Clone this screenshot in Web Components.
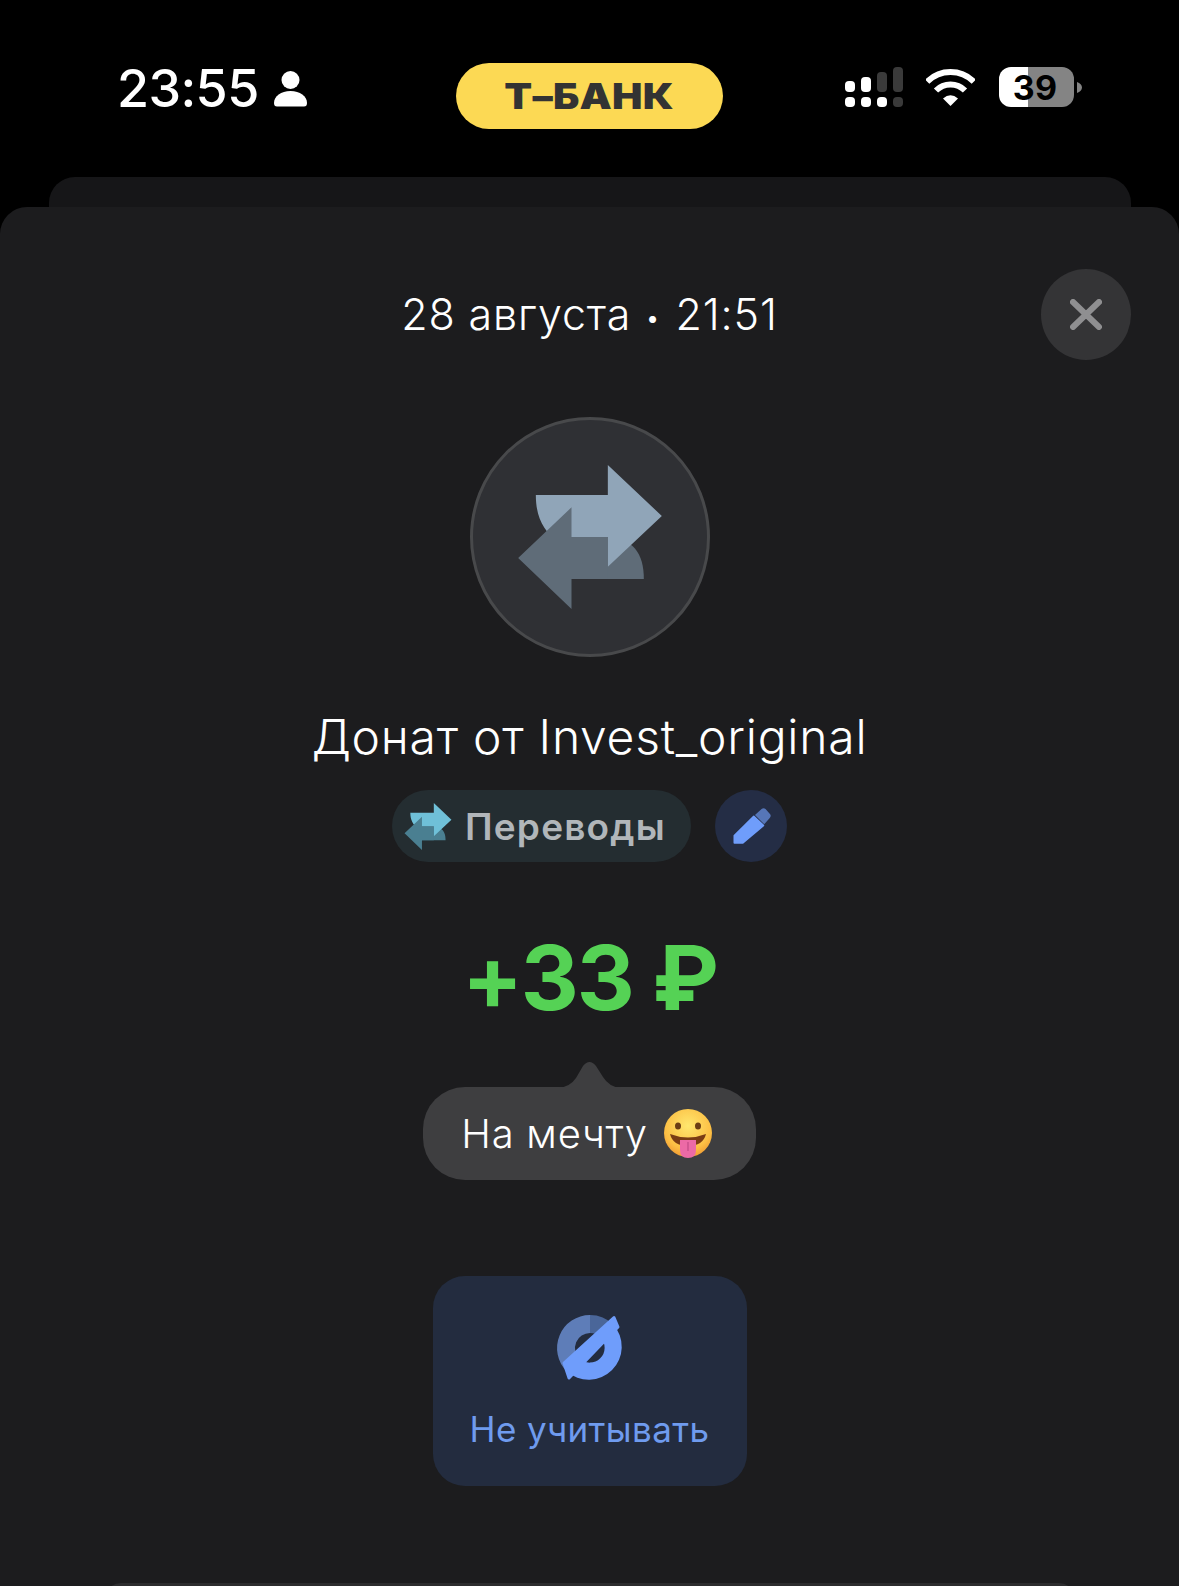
<!DOCTYPE html>
<html lang="ru"><head><meta charset="utf-8"><style>
html,body{margin:0;padding:0;background:#000;height:1586px;overflow:hidden}
body{font-family:Inter,"Noto Sans",sans-serif;color:#fff}
</style></head><body>
<app-screen>
  <status-bar></status-bar>
  <detail-sheet>
    <sheet-header>28 августа <span>•</span> 21:51</sheet-header>
    <op-avatar></op-avatar>
    <op-title>Донат от Invest_original</op-title>
    <op-tags>
      <category-chip>Переводы</category-chip>
      <edit-button></edit-button>
    </op-tags>
    <op-amount>+33 ₽</op-amount>
    <comment-bubble>На мечту</comment-bubble>
    <action-tile>Не учитывать</action-tile>
  </detail-sheet>
</app-screen>
<script>
function def(name, html){
  customElements.define(name, class extends HTMLElement{
    constructor(){super();this.attachShadow({mode:'open'}).innerHTML=html;}
  });
}
const arrows=`<svg viewBox="175 165 431 432" width="100%" height="100%" style="display:block">
<path fill="var(--a2)" d="M335 381H440C520 385 552 430 552 507H335Z"/>
<path fill="var(--a1)" d="M228 255H444V165L606 318L444 470V381H335V400H300C250 365 228 320 228 255Z"/>
<path fill="var(--a2)" d="M175 444L335 292V381H444V507H335V597Z"/></svg>`;
customElements.define('arrow-pair', class extends HTMLElement{
  constructor(){super();this.attachShadow({mode:'open'}).innerHTML=`<style>:host{display:block;--a1:#90a5b8;--a2:#5f6c78}</style>`+arrows;}
});
def('app-screen',`<style>:host{display:flex;flex-direction:column;height:1586px;overflow:hidden;background:#000}</style><slot></slot>`);
def('status-bar',`<style>
:host{display:grid;grid-template-columns:1fr auto 1fr;align-items:start;height:177px;box-sizing:border-box;padding-top:63px}
.l{display:flex;align-items:flex-start;padding:0 0 0 117px;gap:15px;font-size:52px;font-weight:500;line-height:52px;letter-spacing:-.6px}
.l svg{margin-top:8px}
.pill{width:267px;height:66px;border-radius:33px;background:#fcd954;color:#333;display:flex;align-items:center;justify-content:center;font-size:35px;font-weight:900;letter-spacing:.2px}
.pill span{display:inline-block;transform:scaleX(1.16)}
.r{justify-self:end;display:flex;align-items:flex-start;padding:4px 97px 0 0}
.wifi{margin:2px 0 0 22px}
.bat{margin-left:24px;width:75px;height:40px;border-radius:12px;background:linear-gradient(90deg,#fff 0 29px,#848484 29px);color:#000;font-size:34px;font-weight:680;line-height:42px;text-align:center;letter-spacing:.3px;padding-right:3px;box-sizing:border-box}
.tip{margin:15px 0 0 3px}
</style>
<div class="l"><span>23:55</span><svg width="33" height="36" viewBox="0 0 33 36"><circle cx="16.5" cy="9" r="9" fill="#fff"/><path fill="#fff" d="M0 32C0 25 7 20 16.500 20S33 25 33 32C33 34.500 32 35.500 30 35.500H3C1 35.500 0 34.500 0 32Z"/></svg></div>
<div class="pill"><span>Т–БАНК</span></div>
<div class="r">
<svg width="59" height="41" viewBox="0 0 59 41">
<g fill="#fff"><rect x="0" y="14" width="10" height="11" rx="4"/><rect x="16" y="10" width="10" height="15" rx="4"/>
<rect x="0" y="30" width="10" height="10" rx="4"/><rect x="16" y="30" width="10" height="10" rx="4"/><rect x="32" y="30" width="10" height="10" rx="4"/></g>
<g fill="#3a3a3a"><rect x="32" y="5" width="10" height="20" rx="4"/><rect x="48" y="0" width="10" height="25" rx="4"/><rect x="48" y="30" width="10" height="10" rx="4"/></g></svg>
<svg class="wifi" width="49" height="37" viewBox="0 0 49 37" fill="none" stroke="#fff" stroke-width="6"><path d="M1.200 12.700A33 33 0 0 1 47.800 12.700"/><path d="M10 21.500A20.500 20.500 0 0 1 39 21.500"/><path fill="#fff" stroke="none" d="M24.500 37L17 29.500Q24.500 23 32 29.500Z"/></svg>
<div class="bat">39</div>
<svg class="tip" width="5" height="11" viewBox="0 0 5 11"><path fill="#848484" d="M0 0C3 1 5 3 5 5.500S3 10 0 11Z"/></svg>
</div>`);
def('detail-sheet',`<style>
:host{display:block;position:relative;flex:1;margin:0}
.back{height:30px;margin:0 48px 0 49px;background:#161618;border-radius:26px 26px 0 0}
.front{position:relative;height:1379px;background:#1c1c1e;border-radius:27px 27px 0 0;display:flex;flex-direction:column;align-items:center;padding-top:62px;box-sizing:border-box;overflow:hidden}
.next{position:absolute;left:105px;right:104px;top:1376px;height:20px;background:#2c2c2e;border-radius:16px 16px 0 0}
</style><div class="back"></div><div class="front"><slot></slot><div class="next"></div></div>`);
def('sheet-header',`<style>
:host{display:grid;grid-template-columns:1fr auto 1fr;grid-template-rows:91px;align-items:center;align-self:stretch;padding:0 48px;font-size:43px;font-weight:350;letter-spacing:.85px;color:#fff}
button{grid-column:3;justify-self:end;width:90px;height:91px;border:0;padding:0;border-radius:50%;background:#343436;display:flex;align-items:center;justify-content:center}
.t{grid-column:2;line-height:91px;height:91px;overflow:visible}
::slotted(span){font-size:26px;line-height:0;vertical-align:3px;margin:0 2px 0 1px}
</style><div class="t"><slot></slot></div><button aria-label="Закрыть"><svg width="32" height="31" viewBox="0 0 32 31" fill="none" stroke="#8f8f91" stroke-width="6" stroke-linecap="round"><path d="M3 3L29 28M29 3L3 28"/></svg></button>`);
def('op-avatar',`<style>
:host{display:flex;align-items:center;justify-content:center;box-sizing:border-box;width:240px;height:240px;margin-top:57px;border-radius:50%;background:#2f3034;border:3px solid #48494b}
arrow-pair{width:144px;height:144px}
</style><arrow-pair></arrow-pair>`);
def('op-title',`<style>:host{display:block;margin-top:50px;font-size:48px;font-weight:350;line-height:60px;letter-spacing:.75px;white-space:nowrap}</style><slot></slot>`);
def('op-tags',`<style>:host{display:flex;gap:24px;margin-top:23px;align-items:center}</style><slot></slot>`);
def('category-chip',`<style>
:host{display:flex;align-items:center;height:72px;box-sizing:border-box;width:299px;padding-left:12px;gap:13px;border-radius:36px;background:#242d31;color:#b1b6ba;font-size:37px;font-weight:600;letter-spacing:1.2px}
arrow-pair{width:48px;height:47px;--a1:#6fc0d8;--a2:#4a7f91}
</style><arrow-pair></arrow-pair><span><slot></slot></span>`);
def('edit-button',`<style>
:host{display:flex;align-items:center;justify-content:center;width:72px;height:72px;border-radius:50%;background:#242d45}
</style><svg width="41" height="38" viewBox="0 0 123 115"><path fill="#6f9dfb" stroke="#6f9dfb" stroke-width="6" stroke-linejoin="round" d="M10 108L10 87L68 29L97 56L35 108Z"/><path fill="#5676b8" d="M72 24L92 6Q98 2 104 6L118 22Q122 28 116 34L100 52Z"/></svg>`);
def('op-amount',`<style>:host{display:block;margin-top:66px;font-size:90px;font-weight:650;line-height:100px;color:#55d255;letter-spacing:-2px}</style><slot></slot>`);
def('comment-bubble',`<style>
:host{display:flex;position:relative;align-items:center;gap:15px;margin-top:59px;height:93px;box-sizing:border-box;padding:0 43px 0 38px;background:#3e3e40;border-radius:42px;font-size:40px;font-weight:350;letter-spacing:.75px}
.tail{position:absolute;left:50%;top:-27px;margin-left:-32px}
</style><svg class="tail" width="63" height="28" viewBox="0 0 63 28"><path fill="#3e3e40" d="M0 28Q12 27 18 18L25 6Q31.500 -2 38 6L45 17Q51 27 63 28Z"/></svg><span><slot></slot></span>
<svg width="50" height="50" viewBox="0 0 50 50"><defs><radialGradient id="f" cx=".5" cy=".35" r=".7"><stop offset="0" stop-color="#ffe76e"/><stop offset=".7" stop-color="#fcbf44"/><stop offset="1" stop-color="#ee9430"/></radialGradient></defs>
<circle cx="25" cy="24" r="24" fill="url(#f)"/><ellipse cx="15" cy="17" rx="3" ry="3.500" fill="#6b3d14"/><ellipse cx="35" cy="17" rx="3" ry="3.500" fill="#6b3d14"/>
<path fill="#7a3c14" d="M7 25Q25 32 43 25Q40 37 25 37T7 25Z"/>
<path fill="#ec6aa6" d="M17 31H33V41Q33 49 25 49T17 41Z"/><path stroke="#c24a86" stroke-width="1.200" d="M25 33V42"/></svg>`);
def('action-tile',`<style>
:host{display:flex;flex-direction:column;align-items:center;box-sizing:border-box;width:314px;height:210px;margin-top:96px;padding-top:39px;border-radius:32px;background:#232c3f;color:#6f9bee;font-size:35px;font-weight:400;letter-spacing:.4px}
svg{display:block;overflow:visible}
span{margin-top:26px;line-height:44px}
</style><svg width="66" height="66" viewBox="0 0 66 66">
<path fill="#4a6699" d="M33 0A33 33 0 0 1 56.300 9.700L43.600 22.400A15 15 0 0 0 33 18Z"/>
<path fill="#5e7db8" d="M33 0A33 33 0 0 0 9.700 56.300L22.400 43.600A15 15 0 0 1 33 18Z"/>
<path fill="#6f9dfb" d="M56.300 9.700A33 33 0 0 1 9.700 56.300L22.400 43.600A15 15 0 0 0 43.600 22.400Z"/>
<path fill="#6f9dfb" stroke="#6f9dfb" stroke-width="3" stroke-linejoin="round" d="M7 48L57 2.500L61 12L12 63Z"/></svg><span><slot></slot></span>`);
</script>
</body></html>
